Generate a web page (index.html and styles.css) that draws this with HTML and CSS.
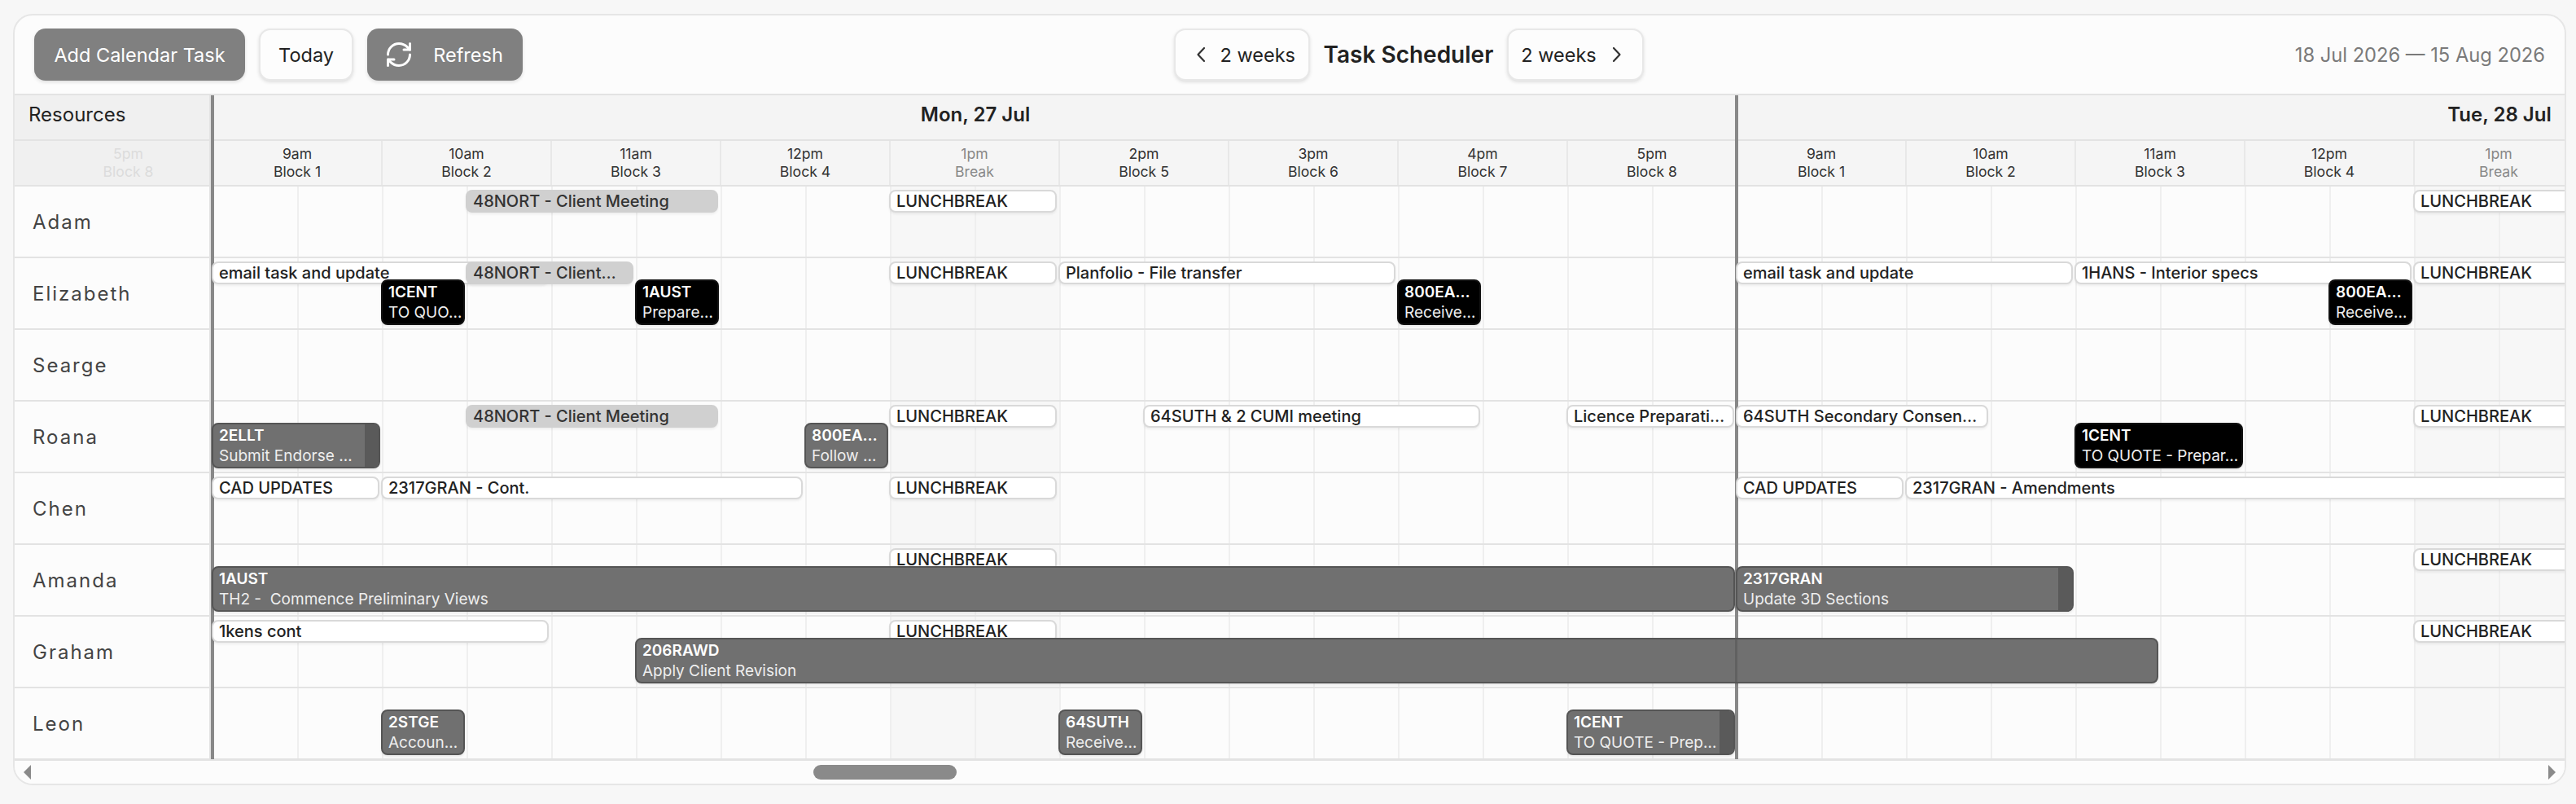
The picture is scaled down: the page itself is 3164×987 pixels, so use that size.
FILE: index.html
```html
<!DOCTYPE html>
<html lang="en">
<head>
<meta charset="utf-8">
<title>Task Scheduler</title>
<link rel="stylesheet" href="styles.css">
</head>
<body>
<main class="card">
  <header class="toolbar">
    <div class="tb-group">
      <button class="btn btn-solid btn-add">Add Calendar Task</button>
      <button class="btn btn-plain btn-today">Today</button>
      <button class="btn btn-solid btn-refresh">
        <svg class="ico-refresh" viewBox="2 2 20 20" fill="none" stroke="currentColor" stroke-width="2" stroke-linecap="round" stroke-linejoin="round"><path d="M3 12a9 9 0 0 1 9-9 9.75 9.75 0 0 1 6.74 2.74L21 8"/><path d="M21 3v5h-5"/><path d="M21 12a9 9 0 0 1-9 9 9.75 9.75 0 0 1-6.74-2.74L3 16"/><path d="M8 16H3v5"/></svg>
        <span>Refresh</span>
      </button>
    </div>
    <div class="tb-group tb-center">
      <button class="btn btn-plain btn-nav">
        <svg class="ico-chev" viewBox="0 0 12 20" fill="none" stroke="currentColor" stroke-width="2.2" stroke-linecap="round" stroke-linejoin="round"><path d="M10 2 2.500 10 10 18"/></svg>
        <span>2 weeks</span>
      </button>
      <h1 class="title">Task Scheduler</h1>
      <button class="btn btn-plain btn-nav btn-nav-r">
        <span>2 weeks</span>
        <svg class="ico-chev" viewBox="0 0 12 20" fill="none" stroke="currentColor" stroke-width="2.2" stroke-linecap="round" stroke-linejoin="round"><path d="M2 2 9.500 10 2 18"/></svg>
      </button>
    </div>
    <div class="daterange">18 Jul 2026 — 15 Aug 2026</div>
  </header>

  <section class="grid">
    <aside class="resources">
      <div class="res-head">Resources</div>
      <div class="res-ghost"><span>5pm</span><span>Block 8</span></div>
      <div class="res-name">Adam</div>
      <div class="res-name">Elizabeth</div>
      <div class="res-name">Searge</div>
      <div class="res-name">Roana</div>
      <div class="res-name">Chen</div>
      <div class="res-name">Amanda</div>
      <div class="res-name">Graham</div>
      <div class="res-name">Leon</div>
    </aside>

    <div class="timeline">
      <i class="day-line"></i>
      <i class="day-line day-line-2"></i>
      <div class="days">
        <div class="day">Mon, 27 Jul</div>
        <div class="day">Tue, 28 Jul</div>
      </div>
      <div class="blocks">
        <div class="block"><span>9am</span><span>Block 1</span></div>
        <div class="block"><span>10am</span><span>Block 2</span></div>
        <div class="block"><span>11am</span><span>Block 3</span></div>
        <div class="block"><span>12pm</span><span>Block 4</span></div>
        <div class="block block-break"><span>1pm</span><span>Break</span></div>
        <div class="block"><span>2pm</span><span>Block 5</span></div>
        <div class="block"><span>3pm</span><span>Block 6</span></div>
        <div class="block"><span>4pm</span><span>Block 7</span></div>
        <div class="block"><span>5pm</span><span>Block 8</span></div>
        <div class="block"><span>9am</span><span>Block 1</span></div>
        <div class="block"><span>10am</span><span>Block 2</span></div>
        <div class="block"><span>11am</span><span>Block 3</span></div>
        <div class="block"><span>12pm</span><span>Block 4</span></div>
        <div class="block block-break"><span>1pm</span><span>Break</span></div>
      </div>

      <div class="row">
        <div class="ev ev-s ev-soft" style="grid-column:4/7">48NORT - Client Meeting</div>
        <div class="ev ev-s" style="grid-column:9/11">LUNCHBREAK</div>
        <div class="ev ev-s" style="grid-column:27/29">LUNCHBREAK</div>
      </div>

      <div class="row">
        <div class="ev ev-s" style="grid-column:1/5">email task and update</div>
        <div class="ev ev-s ev-soft" style="grid-column:4/6">48NORT - Client…</div>
        <div class="ev ev-t ev-black" style="grid-column:3/4"><b>1CENT</b><span>TO QUO…</span></div>
        <div class="ev ev-t ev-black" style="grid-column:6/7"><b>1AUST</b><span>Prepare…</span></div>
        <div class="ev ev-s" style="grid-column:9/11">LUNCHBREAK</div>
        <div class="ev ev-s" style="grid-column:11/15">Planfolio - File transfer</div>
        <div class="ev ev-t ev-black" style="grid-column:15/16"><b>800EA…</b><span>Receive…</span></div>
        <div class="ev ev-s" style="grid-column:19/23">email task and update</div>
        <div class="ev ev-s" style="grid-column:23/27">1HANS - Interior specs</div>
        <div class="ev ev-t ev-black" style="grid-column:26/27"><b>800EA…</b><span>Receive…</span></div>
        <div class="ev ev-s" style="grid-column:27/29">LUNCHBREAK</div>
      </div>

      <div class="row"></div>

      <div class="row">
        <div class="ev ev-t ev-grey ev-prog" style="grid-column:1/3"><b>2ELLT</b><span>Submit Endorse …</span></div>
        <div class="ev ev-s ev-soft" style="grid-column:4/7">48NORT - Client Meeting</div>
        <div class="ev ev-t ev-grey" style="grid-column:8/9"><b>800EA…</b><span>Follow …</span></div>
        <div class="ev ev-s" style="grid-column:9/11">LUNCHBREAK</div>
        <div class="ev ev-s" style="grid-column:12/16">64SUTH &amp; 2 CUMI meeting</div>
        <div class="ev ev-s" style="grid-column:17/19">Licence Preparati…</div>
        <div class="ev ev-s" style="grid-column:19/22">64SUTH Secondary Consen…</div>
        <div class="ev ev-t ev-black" style="grid-column:23/25"><b>1CENT</b><span>TO QUOTE - Prepar…</span></div>
        <div class="ev ev-s" style="grid-column:27/29">LUNCHBREAK</div>
      </div>

      <div class="row">
        <div class="ev ev-s" style="grid-column:1/3">CAD UPDATES</div>
        <div class="ev ev-s" style="grid-column:3/8">2317GRAN - Cont.</div>
        <div class="ev ev-s" style="grid-column:9/11">LUNCHBREAK</div>
        <div class="ev ev-s" style="grid-column:19/21">CAD UPDATES</div>
        <div class="ev ev-s" style="grid-column:21/34">2317GRAN - Amendments</div>
      </div>

      <div class="row">
        <div class="ev ev-s" style="grid-column:9/11">LUNCHBREAK</div>
        <div class="ev ev-t ev-grey" style="grid-column:1/19"><b>1AUST</b><span>TH2 -  Commence Preliminary Views</span></div>
        <div class="ev ev-t ev-grey ev-prog" style="grid-column:19/23"><b>2317GRAN</b><span>Update 3D Sections</span></div>
        <div class="ev ev-s" style="grid-column:27/29">LUNCHBREAK</div>
      </div>

      <div class="row">
        <div class="ev ev-s" style="grid-column:1/5">1kens cont</div>
        <div class="ev ev-s" style="grid-column:9/11">LUNCHBREAK</div>
        <div class="ev ev-t ev-grey ev-seamed" style="grid-column:6/24"><b>206RAWD</b><span>Apply Client Revision</span></div>
        <div class="ev ev-s" style="grid-column:27/29">LUNCHBREAK</div>
      </div>

      <div class="row">
        <div class="ev ev-t ev-grey" style="grid-column:3/4"><b>2STGE</b><span>Accoun…</span></div>
        <div class="ev ev-t ev-grey" style="grid-column:11/12"><b>64SUTH</b><span>Receive…</span></div>
        <div class="ev ev-t ev-grey ev-prog" style="grid-column:17/19"><b>1CENT</b><span>TO QUOTE - Prep…</span></div>
      </div>
    </div>
  </section>

  <footer class="hscroll">
    <svg class="arrow" viewBox="0 0 9 18"><path d="M9 0v18L0 9z"/></svg>
    <div class="thumb"></div>
    <svg class="arrow arrow-r" viewBox="0 0 9 18"><path d="M0 0v18l9-9z"/></svg>
  </footer>
</main>
</body>
</html>
```
FILE: styles.css
```css
* { box-sizing: border-box; }

html, body { margin: 0; height: 100%; }

body {
  background: #f7f7f7;
  font-family: Inter, "Liberation Sans", sans-serif;
  color: #222;
  padding: 17px 12px 0 16px;
  overflow: hidden;
}

.card {
  display: flex;
  flex-direction: column;
  height: 947px;
  background: #fcfcfc;
  border: 2px solid #e6e6e6;
  border-radius: 24px;
  overflow: hidden;
}

/* toolbar */
.toolbar {
  flex: none;
  height: 98px;
  display: flex;
  align-items: center;
  justify-content: space-between;
  padding: 0 24px;
  border-bottom: 2px solid #e3e3e3;
}

.tb-group { display: flex; align-items: center; gap: 17px; }

.btn {
  height: 64px;
  display: inline-flex;
  align-items: center;
  justify-content: center;
  padding: 0;
  border-radius: 14px;
  font: 400 23.500px Inter, "Liberation Sans", sans-serif;
  box-shadow: 0 2px 4px rgba(0, 0, 0, .12);
}

.btn-solid { background: #808080; color: #fff; border: 0; }
.btn-plain { background: #fdfdfd; color: #222; border: 2px solid #e8e8e8; }

.btn-add { width: 259px; }
.btn-today { width: 116px; }
.btn-refresh { width: 191px; gap: 27px; }
.ico-refresh { width: 30px; height: 30px; }

.btn-nav {
  width: 167px;
  justify-content: flex-start;
  padding-left: 25px;
  gap: 18px;
}

.btn-nav-r { width: 168px; padding-left: 15px; gap: 19px; }
.ico-chev { width: 12px; height: 20px; color: #333; }

.title { margin: 0; font-size: 28px; font-weight: 600; color: #222; }

.daterange { font-size: 23.700px; color: #7a7a7a; }

/* grid */
.grid {
  flex: 1;
  min-height: 0;
  display: flex;
  overflow: hidden;
}

.resources {
  flex: none;
  width: 244px;
  border-right: 5px solid #e3e3e3;
}

.res-head {
  height: 56px;
  padding: 0 0 8px 17px;
  display: flex;
  align-items: center;
  background: #f0f0f0;
  border-bottom: 2px solid #e3e3e3;
  font-size: 24px;
  color: #222;
}

.res-ghost {
  height: 56px;
  padding-left: 40px;
  display: flex;
  flex-direction: column;
  align-items: center;
  justify-content: center;
  background: #f0f0f0;
  border-bottom: 2px solid #e3e3e3;
  font-size: 17.600px;
  line-height: 22px;
  color: #dcdcdc;
}

.res-name {
  height: 88px;
  padding-left: 22px;
  display: flex;
  align-items: center;
  border-bottom: 2px solid #e3e3e3;
  font-size: 24px;
  letter-spacing: 2px;
  color: #444;
}

.timeline {
  position: relative;
  flex: none;
  width: 3744px;
}

.day-line {
  position: absolute;
  top: 0;
  bottom: 0;
  left: -3px;
  width: 4px;
  background: #888;
  z-index: 1;
}

.day-line-2 { left: 1869px; }

.days { display: flex; height: 56px; }

.day {
  width: 1872px;
  padding-bottom: 8px;
  display: flex;
  align-items: center;
  justify-content: center;
  background: #f4f4f4;
  border-bottom: 2px solid #e3e3e3;
  font-size: 24px;
  font-weight: 600;
  color: #222;
}

.blocks { display: flex; height: 56px; background: #f5f5f5; border-bottom: 2px solid #e3e3e3; }

.block {
  width: 208px;
  display: flex;
  flex-direction: column;
  align-items: center;
  justify-content: center;
  border-right: 2px solid #e8e8e8;
  font-size: 17.600px;
  line-height: 22px;
  color: #333;
}

.block-break { color: #888; }

.row {
  height: 88px;
  display: grid;
  grid-template-columns: repeat(36, 104px);
  grid-template-rows: 86px;
  border-bottom: 2px solid #e3e3e3;
  background-image:
    linear-gradient(90deg, #efefef 2px, transparent 2px),
    linear-gradient(#f7f7f7, #f7f7f7),
    linear-gradient(#f7f7f7, #f7f7f7);
  background-size: 104px 100%, 208px 100%, 208px 100%;
  background-position: -1px 0, 832px 0, 2704px 0;
  background-repeat: repeat-x, no-repeat, no-repeat;
}

/* events */
.ev {
  position: relative;
  z-index: 2;
  grid-row: 1;
  align-self: start;
  min-width: 0;
  margin-left: -2px;
  margin-right: 4px;
  border-radius: 8px;
  overflow: hidden;
  white-space: pre;
  font-size: 20px;
}

.ev-s {
  height: 28px;
  margin-top: 4px;
  padding: 0 7px;
  line-height: 24px;
  font-weight: 500;
  color: #222;
  background: #fff;
  border: 2px solid #d9d9d9;
  box-shadow: 0 2px 3px rgba(0, 0, 0, .06);
}

.ev-soft { background: #d0d0d0; border-color: #d0d0d0; color: #333; }

.ev-t {
  height: 56px;
  margin-top: 26px;
  margin-right: 3px;
  padding: 1px 7px;
  display: flex;
  flex-direction: column;
  font-size: 19px;
  line-height: 25px;
  color: #eee;
  box-shadow: 0 2px 3px rgba(0, 0, 0, .08);
}

.ev-t b { font-weight: 600; color: #fff; }

.ev-grey { background: #707070; border: 2px solid #555; }
.ev-black { background: #000; border: 2px solid #111; }

.ev-prog::after {
  content: "";
  position: absolute;
  top: 0;
  bottom: 0;
  right: 0;
  width: 17px;
  background: #5a5a5a;
}

.ev-seamed::after {
  content: "";
  position: absolute;
  top: 0;
  bottom: 0;
  left: 1349px;
  width: 3px;
  background: #616161;
}

/* scrollbar */
.hscroll {
  flex: none;
  height: 30px;
  display: flex;
  align-items: center;
  padding: 0 11px;
  background: #fcfcfc;
  border-top: 2px solid #e3e3e3;
}

.arrow { width: 9px; height: 18px; fill: #8a8a8a; flex: none; }

.thumb {
  width: 176px;
  height: 18px;
  margin-left: 961px;
  border-radius: 9px;
  background: #8a8a8a;
}

.arrow-r { margin-left: auto; }
```
